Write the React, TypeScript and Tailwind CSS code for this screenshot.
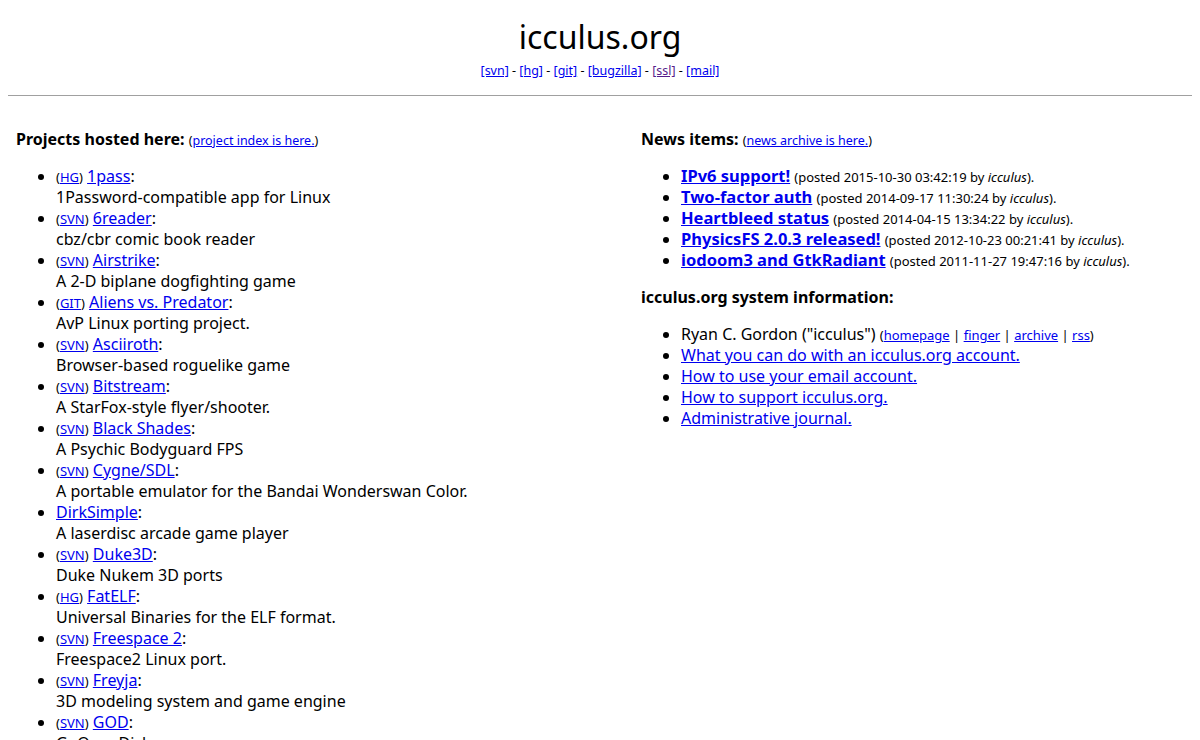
import React from "react";

const font = { fontFamily: '"Noto Sans", "Open Sans", sans-serif' };

type Proj = { tag?: string; name: string; desc: string };

const projects: Proj[] = [
  { tag: "HG", name: "1pass", desc: "1Password-compatible app for Linux" },
  { tag: "SVN", name: "6reader", desc: "cbz/cbr comic book reader" },
  { tag: "SVN", name: "Airstrike", desc: "A 2-D biplane dogfighting game" },
  { tag: "GIT", name: "Aliens vs. Predator", desc: "AvP Linux porting project." },
  { tag: "SVN", name: "Asciiroth", desc: "Browser-based roguelike game" },
  { tag: "SVN", name: "Bitstream", desc: "A StarFox-style flyer/shooter." },
  { tag: "SVN", name: "Black Shades", desc: "A Psychic Bodyguard FPS" },
  { tag: "SVN", name: "Cygne/SDL", desc: "A portable emulator for the Bandai Wonderswan Color." },
  { name: "DirkSimple", desc: "A laserdisc arcade game player" },
  { tag: "SVN", name: "Duke3D", desc: "Duke Nukem 3D ports" },
  { tag: "HG", name: "FatELF", desc: "Universal Binaries for the ELF format." },
  { tag: "SVN", name: "Freespace 2", desc: "Freespace2 Linux port." },
  { tag: "SVN", name: "Freyja", desc: "3D modeling system and game engine" },
  { tag: "SVN", name: "GOD", desc: "GoOpenDisk" },
];

const news = [
  { title: "IPv6 support!", date: "2015-10-30 03:42:19" },
  { title: "Two-factor auth", date: "2014-09-17 11:30:24" },
  { title: "Heartbleed status", date: "2014-04-15 13:34:22" },
  { title: "PhysicsFS 2.0.3 released!", date: "2012-10-23 00:21:41" },
  { title: "iodoom3 and GtkRadiant", date: "2011-11-27 19:47:16" },
];

const A = ({ children, visited }: { children: React.ReactNode; visited?: boolean }) => (
  <a href="#" className={visited ? "text-[#551a8b] underline" : "text-[#0000ee] underline"}>
    {children}
  </a>
);

export default function App() {
  return (
    <div className="min-h-[740px] bg-white text-black px-2" style={font}>
      <div className="text-center pt-[15px]">
        <div className="text-[32px] leading-[44px]">icculus.org</div>
        <div className="text-[12.5px] leading-[20px] mt-[2px]">
          <A>[svn]</A> - <A>[hg]</A> - <A>[git]</A> - <A>[bugzilla]</A> - <A visited>[ssl]</A> - <A>[mail]</A>
        </div>
      </div>
      <div className="mt-[14px] border-t border-[#a0a0a0] h-px bg-[#e0e0e0]" />
      <div className="grid grid-cols-[625px_1fr] px-2 pt-[33px]">
        <div>
          <div className="leading-[21px] text-[16px]">
            <span className="font-bold">Projects hosted here:</span>{" "}
            <span className="text-[12.5px] leading-none">(<A>project index is here.</A>)</span>
          </div>
          <ul className="list-disc pl-10 mt-4 text-[16px] leading-[21px]">
            {projects.map((p) => (
              <li key={p.name}>
                {p.tag && (
                  <>
                    <span className="text-[13px] leading-none">
                      (<A>{p.tag}</A>)
                    </span>{" "}
                  </>
                )}
                <A>{p.name}</A>:
                <br />
                {p.desc}
              </li>
            ))}
          </ul>
        </div>
        <div>
          <div className="leading-[21px] text-[16px]">
            <span className="font-bold">News items:</span>{" "}
            <span className="text-[12.5px] leading-none">(<A>news archive is here.</A>)</span>
          </div>
          <ul className="list-disc pl-10 mt-4 text-[16px] leading-[21px]">
            {news.map((n) => (
              <li key={n.title}>
                <span className="font-bold text-[16.5px] leading-none">
                  <A>{n.title}</A>
                </span>{" "}
                <span className="text-[13px] leading-none">
                  (posted {n.date} by <i>icculus</i>).
                </span>
              </li>
            ))}
          </ul>
          <div className="leading-[21px] mt-4 font-bold text-[16px]">icculus.org system information:</div>
          <ul className="list-disc pl-10 mt-4 text-[16px] leading-[21px]">
            <li>
              Ryan C. Gordon ("icculus"){" "}
              <span className="text-[13px] leading-none">
                (<A>homepage</A> | <A>finger</A> | <A>archive</A> | <A>rss</A>)
              </span>
            </li>
            <li>
              <A>What you can do with an icculus.org account.</A>
            </li>
            <li>
              <A>How to use your email account.</A>
            </li>
            <li>
              <A>How to support icculus.org.</A>
            </li>
            <li>
              <A>Administrative journal.</A>
            </li>
          </ul>
        </div>
      </div>
    </div>
  );
}
